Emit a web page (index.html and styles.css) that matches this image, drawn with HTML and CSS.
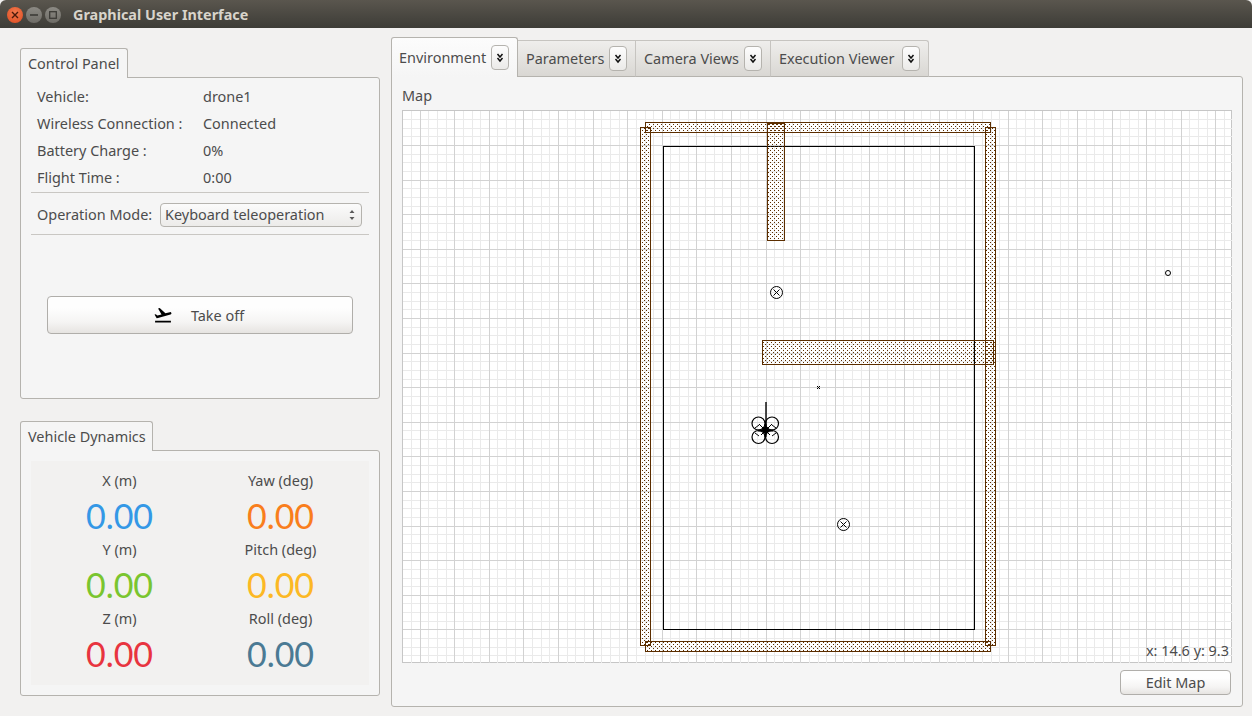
FILE: index.html
```html
<!DOCTYPE html>
<html lang="en">
  <head>
    <meta charset="utf-8">
    <title>Graphical User Interface</title>
    <link rel="stylesheet" href="styles.css">
  </head>
  <body>
    <div class="window">
      <header class="titlebar">
        <span class="win-btn win-close">
          <svg width="8" height="8" viewBox="0 0 8 8"><path d="M1 1l6 6M7 1l-6 6" stroke="#4a1a0a" stroke-width="1.4"/></svg>
        </span>
        <span class="win-btn win-other">
          <svg width="8" height="8" viewBox="0 0 8 8"><path d="M0 4h8" stroke="#3c3b37" stroke-width="1.6"/></svg>
        </span>
        <span class="win-btn win-other">
          <svg width="8" height="8" viewBox="0 0 8 8"><rect x="0.7" y="0.7" width="6.6" height="6.6" fill="none" stroke="#3c3b37" stroke-width="1.3"/></svg>
        </span>
        <span class="win-title">Graphical User Interface</span>
      </header>

      <main class="content">
        <div class="left-col">
          <section class="group group-control">
            <div class="group-tab">Control Panel</div>
            <div class="group-body control-body">
              <div class="info-row"><span class="info-label">Vehicle:</span><span>drone1</span></div>
              <div class="info-row"><span class="info-label">Wireless Connection :</span><span>Connected</span></div>
              <div class="info-row"><span class="info-label">Battery Charge :</span><span>0%</span></div>
              <div class="info-row"><span class="info-label">Flight Time :</span><span>0:00</span></div>
              <div class="mode-row">
                <span class="mode-label">Operation Mode:</span>
                <div class="select">
                  <span>Keyboard teleoperation</span>
                  <svg width="8" height="14" viewBox="0 0 8 14"><path d="M4 2l2.500 3h-5zM4 12l2.500-3h-5z" fill="#5a5a5a"/></svg>
                </div>
              </div>
              <div class="takeoff-wrap">
                <button class="btn btn-takeoff">
                  <svg width="20" height="20" viewBox="0 0 24 24"><path d="M2.500 19h19v2h-19zm19.570-9.360c-.21-.8-1.040-1.280-1.840-1.060L14.920 10l-6.900-6.430-1.930.51 4.140 7.170-4.970 1.330-1.970-1.540-1.450.39 1.820 3.160.77 1.330 1.600-.43 5.310-1.420 4.350-1.160L21 11.490c.81-.23 1.280-1.050 1.070-1.850z" fill="#000"/></svg>
                  <span>Take off</span>
                </button>
              </div>
            </div>
          </section>

          <section class="group group-dynamics">
            <div class="group-tab">Vehicle Dynamics</div>
            <div class="group-body dynamics-body">
              <div class="metrics">
                <div class="metric"><span class="metric-name">X (m)</span><span class="metric-value c-blue">0.00</span></div>
                <div class="metric"><span class="metric-name">Yaw (deg)</span><span class="metric-value c-orange">0.00</span></div>
                <div class="metric"><span class="metric-name">Y (m)</span><span class="metric-value c-green">0.00</span></div>
                <div class="metric"><span class="metric-name">Pitch (deg)</span><span class="metric-value c-yellow">0.00</span></div>
                <div class="metric"><span class="metric-name">Z (m)</span><span class="metric-value c-red">0.00</span></div>
                <div class="metric"><span class="metric-name">Roll (deg)</span><span class="metric-value c-slate">0.00</span></div>
              </div>
            </div>
          </section>
        </div>

        <div class="right-col">
          <nav class="tabs">
            <div class="tab tab-active tab-env">
              <span>Environment</span>
              <span class="tab-btn"><svg width="8" height="10" viewBox="0 0 8 10"><path d="M1.500 1l2.500 3 2.500-3M1.500 5l2.500 3 2.500-3" fill="none" stroke="#111" stroke-width="1.500"/></svg></span>
            </div>
            <div class="tab tab-params">
              <span>Parameters</span>
              <span class="tab-btn"><svg width="8" height="10" viewBox="0 0 8 10"><path d="M1.500 1l2.500 3 2.500-3M1.500 5l2.500 3 2.500-3" fill="none" stroke="#111" stroke-width="1.500"/></svg></span>
            </div>
            <div class="tab tab-camera">
              <span>Camera Views</span>
              <span class="tab-btn"><svg width="8" height="10" viewBox="0 0 8 10"><path d="M1.500 1l2.500 3 2.500-3M1.500 5l2.500 3 2.500-3" fill="none" stroke="#111" stroke-width="1.500"/></svg></span>
            </div>
            <div class="tab tab-exec">
              <span>Execution Viewer</span>
              <span class="tab-btn"><svg width="8" height="10" viewBox="0 0 8 10"><path d="M1.500 1l2.500 3 2.500-3M1.500 5l2.500 3 2.500-3" fill="none" stroke="#111" stroke-width="1.500"/></svg></span>
            </div>
          </nav>

          <section class="tab-panel">
            <div class="map-title">Map</div>
            <div class="map">
              <svg class="map-svg" width="829" height="552" viewBox="403 111 829 552">
                <defs>
                  <pattern id="dots" width="4" height="4" patternUnits="userSpaceOnUse">
                    <rect x="0" y="0" width="1" height="1" fill="#5c2e00"/>
                    <rect x="2" y="2" width="1" height="1" fill="#5c2e00"/>
                  </pattern>
                  <pattern id="dots2" x="1" width="4" height="4" patternUnits="userSpaceOnUse">
                    <rect x="0" y="0" width="1" height="1" fill="#5c2e00"/>
                    <rect x="2" y="2" width="1" height="1" fill="#5c2e00"/>
                  </pattern>
                </defs>
                <path id="grid-minor" fill="none" stroke="#eaeaea" shape-rendering="crispEdges"/>
                <path id="grid-major" fill="none" stroke="#d2d2d2" shape-rendering="crispEdges"/>

                <g shape-rendering="crispEdges" stroke="#000" fill="none">
                  <rect x="663.500" y="146.500" width="311" height="483"/>
                </g>
                <g shape-rendering="crispEdges" stroke="#5c2e00">
                  <rect x="640.500" y="127.500" width="10" height="518" fill="url(#dots)"/>
                  <rect x="985.500" y="127.500" width="10" height="518" fill="url(#dots)"/>
                  <rect x="645.500" y="122.500" width="345" height="10" fill="url(#dots2)"/>
                  <rect x="645.500" y="641.500" width="345" height="10" fill="url(#dots2)"/>
                  <rect x="767.500" y="123.500" width="17" height="117" fill="url(#dots)"/>
                  <rect x="762.500" y="340.500" width="231" height="24" fill="url(#dots2)"/>
                </g>

                <g fill="none" stroke="#000">
                  <circle cx="776.500" cy="292.500" r="6"/>
                  <path d="M773.500 289.500l6 6M779.500 289.500l-6 6"/>
                  <circle cx="843.500" cy="524.500" r="6"/>
                  <path d="M840.500 521.500l6 6M846.500 521.500l-6 6"/>
                  <circle cx="1168" cy="273" r="2.500"/>
                  <path d="M817 386l3 3M820 386l-3 3"/>
                  <circle cx="758.500" cy="423.500" r="6.500" stroke-width="1.200"/>
                  <circle cx="772" cy="423.500" r="6.500" stroke-width="1.200"/>
                  <circle cx="758.500" cy="437" r="6.500" stroke-width="1.200"/>
                  <circle cx="772" cy="437" r="6.500" stroke-width="1.200"/>
                  <path d="M766 402v28" stroke-width="1.400"/>
                  <path d="M759 424l11 11M772 424l-11 11"/>
                  <path d="M755 428l4-3M776 428l-4-3M755 433l4 3M776 433l-4 3"/>
                  <path d="M758 430.500h15M765.500 424v13" stroke-width="2"/>
                  <circle cx="765.500" cy="430" r="3" fill="#000"/>
                </g>
              </svg>
              <span class="map-coords">x: 14.6 y: 9.3</span>
            </div>
            <div class="map-actions">
              <button class="btn btn-edit">Edit Map</button>
            </div>
          </section>
        </div>
      </main>
    </div>
    <script src="map.js"></script>
  </body>
</html>
```

FILE: styles.css
```css
* {
  box-sizing: border-box;
}

html, body {
  margin: 0;
  padding: 0;
  background: #fff;
}

body {
  font-family: 'Noto Sans', sans-serif;
  font-size: 14.45px;
  color: #4c4c4c;
  overflow: hidden;
}

.window {
  width: 1252px;
  height: 716px;
  background: #f2f1f0;
  display: flex;
  flex-direction: column;
}

.titlebar {
  height: 28px;
  flex: none;
  display: flex;
  align-items: center;
  padding: 2px 0 0 7px;
  gap: 3px;
  background: linear-gradient(#5a564e, #3d3c37);
  border-radius: 6px 6px 0 0;
}

.win-btn {
  width: 16px;
  height: 16px;
  border-radius: 50%;
  display: flex;
  align-items: center;
  justify-content: center;
}

.win-close {
  background: radial-gradient(circle at 50% 35%, #f27a4e, #dd4a1f);
}

.win-other {
  background: linear-gradient(#8c8a84, #6e6c66);
}

.win-title {
  margin-left: 9px;
  padding-bottom: 2px;
  font-weight: 700;
  font-size: 14.4px;
  color: #d8d4cb;
}

.content {
  flex: 1;
  display: flex;
  padding-left: 20px;
  gap: 11px;
}

.left-col {
  width: 360px;
  padding-top: 20px;
  display: flex;
  flex-direction: column;
  gap: 22px;
}

.group {
  display: flex;
  flex-direction: column;
}

.group-control {
  height: 351px;
}

.group-dynamics {
  height: 275px;
}

.group-tab {
  align-self: flex-start;
  height: 30px;
  padding: 0 7px;
  margin-bottom: -1px;
  display: flex;
  align-items: center;
  white-space: nowrap;
  background: #f5f5f5;
  border: 1px solid #b5b3ae;
  border-bottom: 0;
  border-radius: 3px 3px 0 0;
  position: relative;
  z-index: 1;
}

.group-control .group-tab {
  width: 108px;
}

.group-dynamics .group-tab {
  width: 133px;
}

.group-body {
  flex: 1;
  background: #f5f5f5;
  border: 1px solid #b5b3ae;
  border-radius: 0 3px 3px 3px;
}

.control-body {
  padding: 5px 10px 0;
  display: flex;
  flex-direction: column;
}

.info-row {
  height: 27px;
  padding-left: 6px;
  display: flex;
  align-items: center;
}

.info-label {
  width: 166px;
}

.mode-row {
  height: 43px;
  margin-top: 1px;
  padding: 2px 0 0 6px;
  display: flex;
  align-items: center;
  border-top: 1px solid #c9c7c3;
  border-bottom: 1px solid #c9c7c3;
}

.mode-label {
  width: 123px;
  white-space: nowrap;
}

.select {
  width: 202px;
  height: 24px;
  padding: 0 5px 0 4px;
  display: flex;
  align-items: center;
  justify-content: space-between;
  border: 1px solid #b5b3ae;
  border-radius: 4px;
  background: linear-gradient(#fbfbfb, #ecebe9);
}

.takeoff-wrap {
  padding: 61px 16px 0;
}

.btn {
  font-family: inherit;
  font-size: 14.45px;
  color: #4c4c4c;
  border: 1px solid #b0aeaa;
  border-radius: 4px;
  background: linear-gradient(#fefefe 30%, #f5f4f3 70%, #e6e4e1);
  padding: 0;
}

.btn-takeoff {
  width: 306px;
  height: 38px;
  padding-right: 3px;
  display: flex;
  align-items: center;
  justify-content: center;
  gap: 18px;
}

.dynamics-body {
  padding: 10px;
}

.metrics {
  height: 224px;
  background: #f2f1f0;
  display: grid;
  grid-template-columns: 1fr 1fr;
  grid-auto-rows: 69px;
  padding-top: 8px;
  padding-left: 8px;
  padding-right: 8px;
}

.metric {
  display: flex;
  flex-direction: column;
  align-items: center;
}

.metric-name {
  line-height: 24px;
}

.metric-value {
  font-family: 'Lato', sans-serif;
  font-size: 34px;
  line-height: 45px;
}

.c-blue { color: #3498e6; }
.c-orange { color: #f97e1c; }
.c-green { color: #7ac52f; }
.c-yellow { color: #fcb824; }
.c-red { color: #e8343f; }
.c-slate { color: #4b7a94; }

.right-col {
  width: 852px;
  padding-top: 9px;
  display: flex;
  flex-direction: column;
}

.tabs {
  display: flex;
  align-items: flex-end;
  height: 40px;
  position: relative;
  z-index: 1;
  margin-bottom: -1px;
}

.tab {
  height: 37px;
  padding: 0 8px;
  display: flex;
  align-items: center;
  justify-content: space-between;
  white-space: nowrap;
  background: linear-gradient(#efeeec, #d9d7d3);
  border: 1px solid #c6c4c0;
  border-left: 0;
  border-bottom-color: #b5b3ae;
}

.tab-exec {
  border-radius: 0 3px 0 0;
}

.tab-active {
  height: 40px;
  padding-left: 7px;
  background: linear-gradient(#fcfcfc, #f5f5f5);
  border: 1px solid #b5b3ae;
  border-bottom: 0;
  border-radius: 3px 3px 0 0;
}

.tab-env { width: 127px; }
.tab-params { width: 118px; }
.tab-camera { width: 135px; }
.tab-exec { width: 158px; }

.tab-btn {
  width: 18px;
  height: 25px;
  display: flex;
  align-items: center;
  justify-content: center;
  background: linear-gradient(#fdfdfd, #ebeae8);
  border: 1px solid #b5b3ae;
  border-radius: 4px;
}

.tab-panel {
  height: 631px;
  padding: 0 10px;
  background: #f5f5f5;
  border: 1px solid #b5b3ae;
  border-radius: 0 3px 3px 3px;
}

.map-title {
  height: 33px;
  padding-top: 9px;
  line-height: 20px;
}

.map {
  position: relative;
  width: 830px;
  height: 553px;
  background: #fff;
  border: 1px solid #c6c6c6;
  line-height: 0;
}

.map-coords {
  position: absolute;
  right: 2px;
  bottom: 2px;
  line-height: 18px;
}

.map-actions {
  padding: 7px 1px 0 0;
  display: flex;
  justify-content: flex-end;
}

.btn-edit {
  width: 111px;
  height: 25px;
}
```

FILE: map.js
```js
// draws the map grid, a major line every 4 cells
const cell = 8.65;
const bounds = { left: 403, right: 1232, top: 111, bottom: 663 };
const originX = 419.6;
const originY = 110.4;

function gridPath(major) {
  let d = '';
  for (let i = -4; i < 100; i++) {
    if ((i % 4 === 0) !== major) continue;
    const x = Math.round(originX + i * cell) + 0.5;
    if (x > bounds.left && x < bounds.right) d += 'M' + x + ' ' + bounds.top + 'V' + bounds.bottom;
  }
  for (let i = 0; i < 70; i++) {
    if ((i % 4 === 0) !== major) continue;
    const y = Math.round(originY + i * cell) + 0.5;
    if (y > bounds.top && y < bounds.bottom) d += 'M' + bounds.left + ' ' + y + 'H' + bounds.right;
  }
  return d;
}

document.querySelector('#grid-minor').setAttribute('d', gridPath(false));
document.querySelector('#grid-major').setAttribute('d', gridPath(true));
```
